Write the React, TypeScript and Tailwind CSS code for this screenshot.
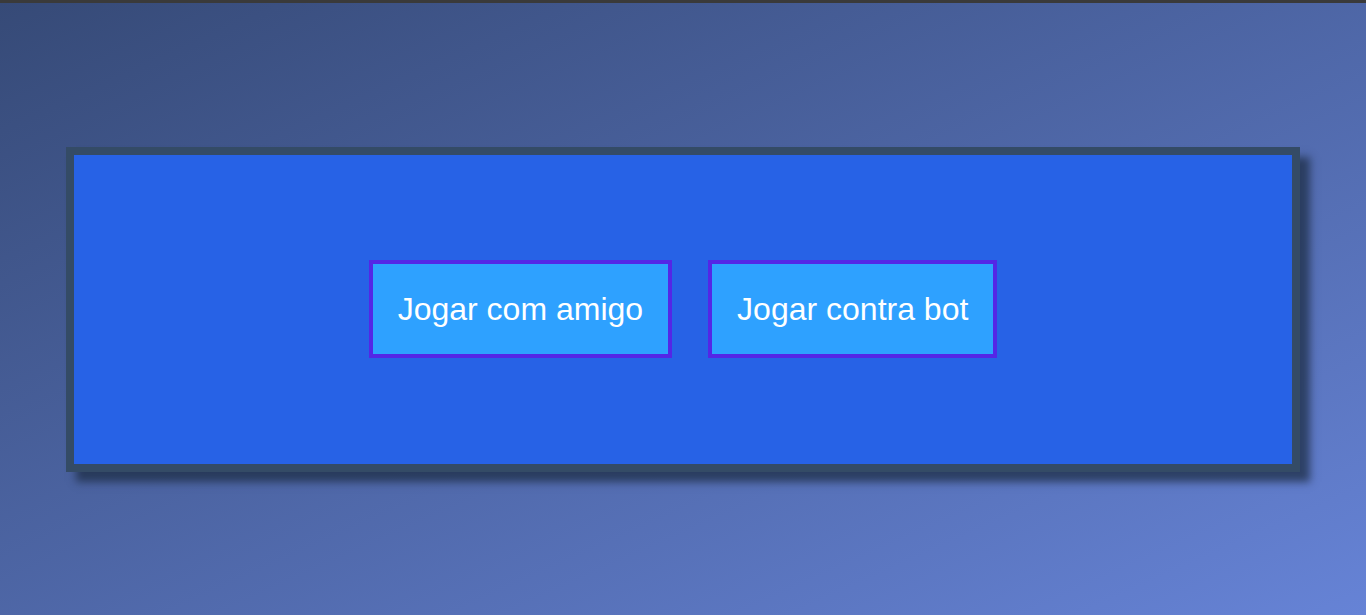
import React from "react";

export default function App() {
  return (
    <div className="w-[1366px] h-[615px] flex flex-col overflow-hidden" style={{ fontFamily: '"Liberation Sans", Arial, sans-serif' }}>
      <div className="h-[3px] bg-[#3a3a3a] shrink-0" />
      <div className="flex-1 flex items-center justify-center bg-[linear-gradient(to_bottom_right,#364a77,#6683d6)]">
        <div className="w-[1234px] h-[325px] border-8 border-[#344b66] bg-[#2762e6] shadow-[10px_10px_8px_rgba(30,45,70,0.75)] flex items-center justify-center gap-[36px]">
          <button className="h-[98px] px-[25px] border-4 border-[#5426e6] bg-[#2ea1ff] text-white text-[32px] leading-none">
            Jogar com amigo
          </button>
          <button className="h-[98px] px-[25px] border-4 border-[#5426e6] bg-[#2ea1ff] text-white text-[32px] leading-none">
            Jogar contra bot
          </button>
        </div>
      </div>
    </div>
  );
}
